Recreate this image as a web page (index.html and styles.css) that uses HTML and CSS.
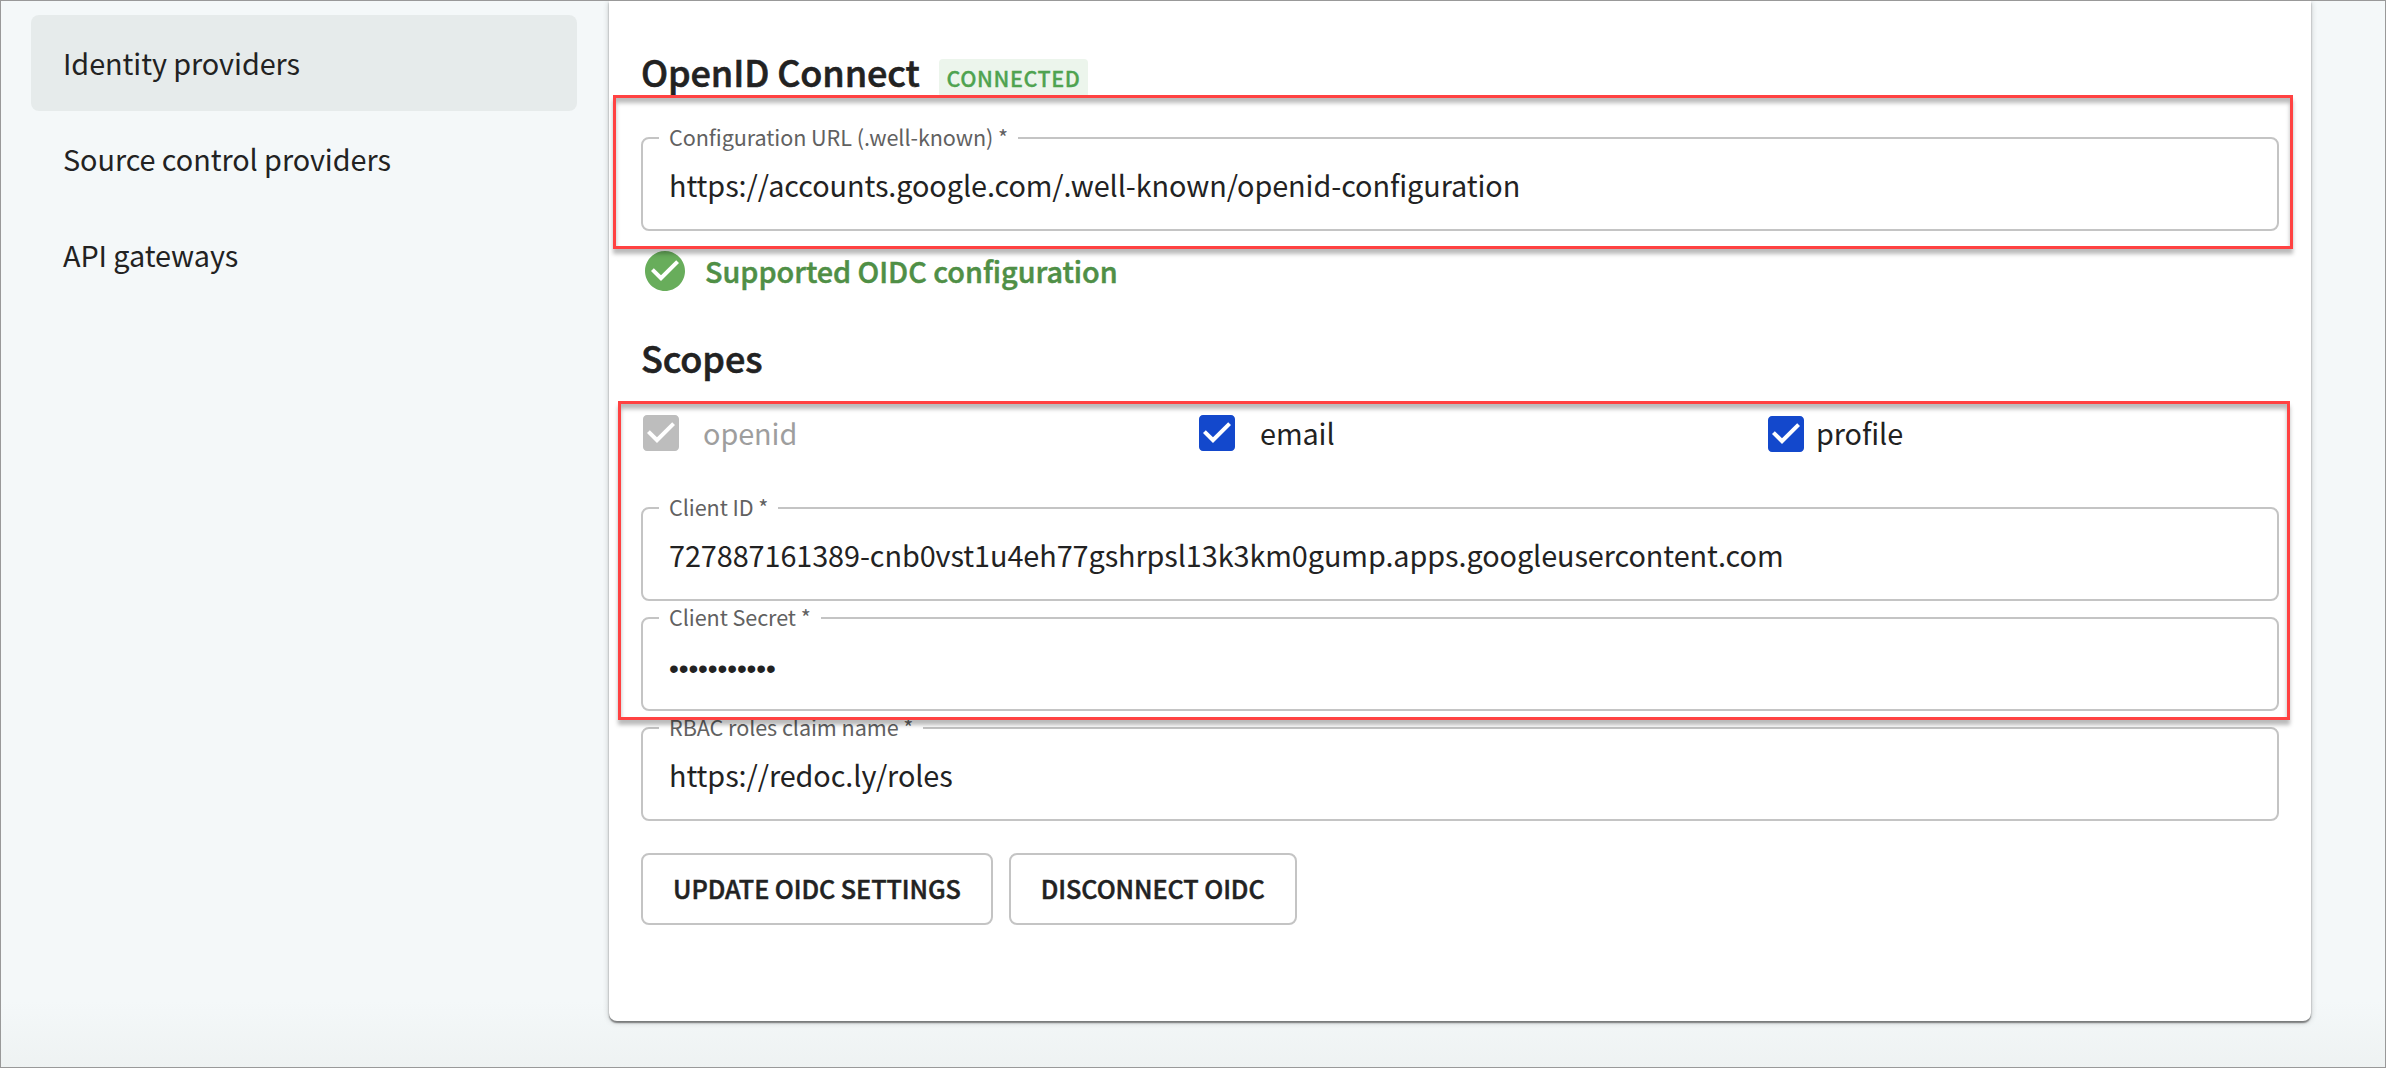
FILE: index.html
```html
<!DOCTYPE html>
<html lang="en">
<head>
<meta charset="utf-8">
<title>Identity providers</title>
<link rel="stylesheet" href="styles.css">
</head>
<body>
<div class="page">
  <nav class="sidebar">
    <a class="nav-item active">Identity providers</a>
    <a class="nav-item">Source control providers</a>
    <a class="nav-item">API gateways</a>
  </nav>
  <main class="card">
    <header class="title-row">
      <h2>OpenID Connect</h2>
      <span class="badge">CONNECTED</span>
    </header>
    <fieldset class="field first">
      <legend>Configuration URL (.well-known) *</legend>
      <div class="value">https://accounts.google.com/.well-known/openid-configuration</div>
    </fieldset>
    <div class="status">
      <svg width="48" height="48" viewBox="0 0 24 24"><path fill="#68ad5b" d="M12 2C6.48 2 2 6.48 2 12s4.480 10 10 10 10-4.480 10-10S17.520 2 12 2zm-2 15l-5-5 1.410-1.410L10 14.170l7.590-7.590L19 8l-9 9z"/></svg>
      <span>Supported OIDC configuration</span>
    </div>
    <h2 class="scopes-title">Scopes</h2>
    <div class="scopes">
      <label class="scope disabled">
        <svg width="48" height="48" viewBox="0 0 24 24"><path d="M19 3H5c-1.110 0-2 .9-2 2v14c0 1.100.890 2 2 2h14c1.110 0 2-.9 2-2V5c0-1.100-.890-2-2-2zm-9 14l-5-5 1.410-1.410L10 14.170l7.590-7.590L19 8l-9 9z"/></svg>
        <span>openid</span>
      </label>
      <label class="scope">
        <svg width="48" height="48" viewBox="0 0 24 24"><path d="M19 3H5c-1.110 0-2 .9-2 2v14c0 1.100.890 2 2 2h14c1.110 0 2-.9 2-2V5c0-1.100-.890-2-2-2zm-9 14l-5-5 1.410-1.410L10 14.170l7.590-7.590L19 8l-9 9z"/></svg>
        <span>email</span>
      </label>
      <label class="scope tight">
        <svg width="48" height="48" viewBox="0 0 24 24"><path d="M19 3H5c-1.110 0-2 .9-2 2v14c0 1.100.890 2 2 2h14c1.110 0 2-.9 2-2V5c0-1.100-.890-2-2-2zm-9 14l-5-5 1.410-1.410L10 14.170l7.590-7.590L19 8l-9 9z"/></svg>
        <span>profile</span>
      </label>
    </div>
    <div class="fields">
      <fieldset class="field">
        <legend>Client ID *</legend>
        <div class="value">727887161389-cnb0vst1u4eh77gshrpsl13k3km0gump.apps.googleusercontent.com</div>
      </fieldset>
      <fieldset class="field">
        <legend>Client Secret *</legend>
        <div class="value secret">•••••••••••</div>
      </fieldset>
      <fieldset class="field">
        <legend>RBAC roles claim name *</legend>
        <div class="value">https://redoc.ly/roles</div>
      </fieldset>
    </div>
    <div class="actions">
      <button>UPDATE OIDC SETTINGS</button>
      <button>DISCONNECT OIDC</button>
    </div>
  </main>
  <div class="callout callout-url"></div>
  <div class="callout callout-client"></div>
</div>
</body>
</html>
```

FILE: styles.css
```css
* { box-sizing: border-box; }

body {
  margin: 0;
  font-family: "Noto Sans CJK SC", "Noto Sans", sans-serif;
  font-size: 28.8px;
  letter-spacing: -0.07px;
  color: #222;
}

.page {
  position: relative;
  display: flex;
  height: 1068px;
  overflow: hidden;
  border: 1px solid #999;
  background: linear-gradient(#f4f8f9 0, #f4f8f9 1000px, #eef2f2 1068px);
}

.sidebar {
  width: 608px;
  padding: 14px 32px 0 30px;
}

.nav-item {
  display: block;
  height: 96px;
  padding-left: 32px;
  border-radius: 8px;
  line-height: 95px;
}

.nav-item.active { background: #e6ebeb; }

.card {
  width: 1702px;
  height: 1020px;
  padding: 50px 32px 0;
  border-radius: 0 0 8px 8px;
  background: #fff;
  box-shadow: 0 2px 2px rgba(0, 0, 0, .3), 0 2px 1px rgba(0, 0, 0, .2), 0 1px 6px rgba(0, 0, 0, .2);
}

h2 {
  margin: 0;
  font-size: 36px;
  font-weight: 500;
  line-height: 40px;
  letter-spacing: -.12px;
  -webkit-text-stroke: .6px;
}

.title-row {
  display: flex;
  align-items: flex-start;
  gap: 19px;
  height: 48px;
}

.badge {
  height: 39px;
  margin-top: 8px;
  padding: 0 8px;
  border-radius: 4px;
  background: #ecf5ec;
  color: #4fa350;
  font-size: 21.6px;
  font-weight: 500;
  line-height: 37px;
  letter-spacing: .55px;
  -webkit-text-stroke: .3px;
}

.field {
  height: 105px;
  margin: 0;
  padding: 0 26px 11px;
  border: 2px solid #c4c4c4;
  border-radius: 8px;
}

.field.first { margin-top: 27px; }

.field legend {
  margin-left: -10px;
  padding: 0 10px 2px 10px;
  color: #616161;
  font-size: 21.6px;
  line-height: 22px;
}

.value { line-height: 70px; }

.secret {
  font-family: "Liberation Sans", Arial, sans-serif;
  font-size: 28px;
  line-height: 77px;
  letter-spacing: -.1px;
}

.status {
  display: flex;
  align-items: center;
  gap: 16px;
  height: 40px;
  margin-top: 20px;
  color: #4f8f46;
  font-weight: 500;
  letter-spacing: -.04px;
  -webkit-text-stroke: .5px;
}

.status svg { -webkit-text-stroke: 0; }

.status span { padding-bottom: 2px; }

.scopes-title { margin-top: 46px; }

.scopes {
  display: grid;
  grid-template-columns: 556px 569px 1fr;
  grid-template-rows: 48px;
  margin: 32px 0 39px -4px;
}

.scope {
  display: flex;
  align-items: center;
  gap: 19px;
}

.scope svg { fill: #1348cc; }
.scope span { padding-bottom: 2px; }
.scope.tight { gap: 6px; }
.scope.tight svg { margin-top: 2px; }
.scope.disabled { gap: 18px; color: #9e9e9e; }
.scope.disabled svg { fill: #bdbdbd; }

.fields {
  display: grid;
  gap: 5px;
}

.actions {
  display: flex;
  gap: 16px;
  margin-top: 32px;
}

button {
  height: 72px;
  padding: 0 30px 2px;
  border: 2px solid #c4c4c4;
  border-radius: 8px;
  background: #fff;
  color: #222;
  font-family: inherit;
  font-size: 25.2px;
  font-weight: 500;
  letter-spacing: -.06px;
  -webkit-text-stroke: .5px;
}

.callout {
  position: absolute;
  border: 3px solid #ff4242;
  box-shadow: 0 5px 4px rgba(0, 0, 0, .27), inset 0 5px 4px rgba(0, 0, 0, .27);
}

.callout-url {
  left: 612px;
  top: 94px;
  width: 1680px;
  height: 154px;
}

.callout-client {
  left: 617px;
  top: 400px;
  width: 1672px;
  height: 319px;
}
```
